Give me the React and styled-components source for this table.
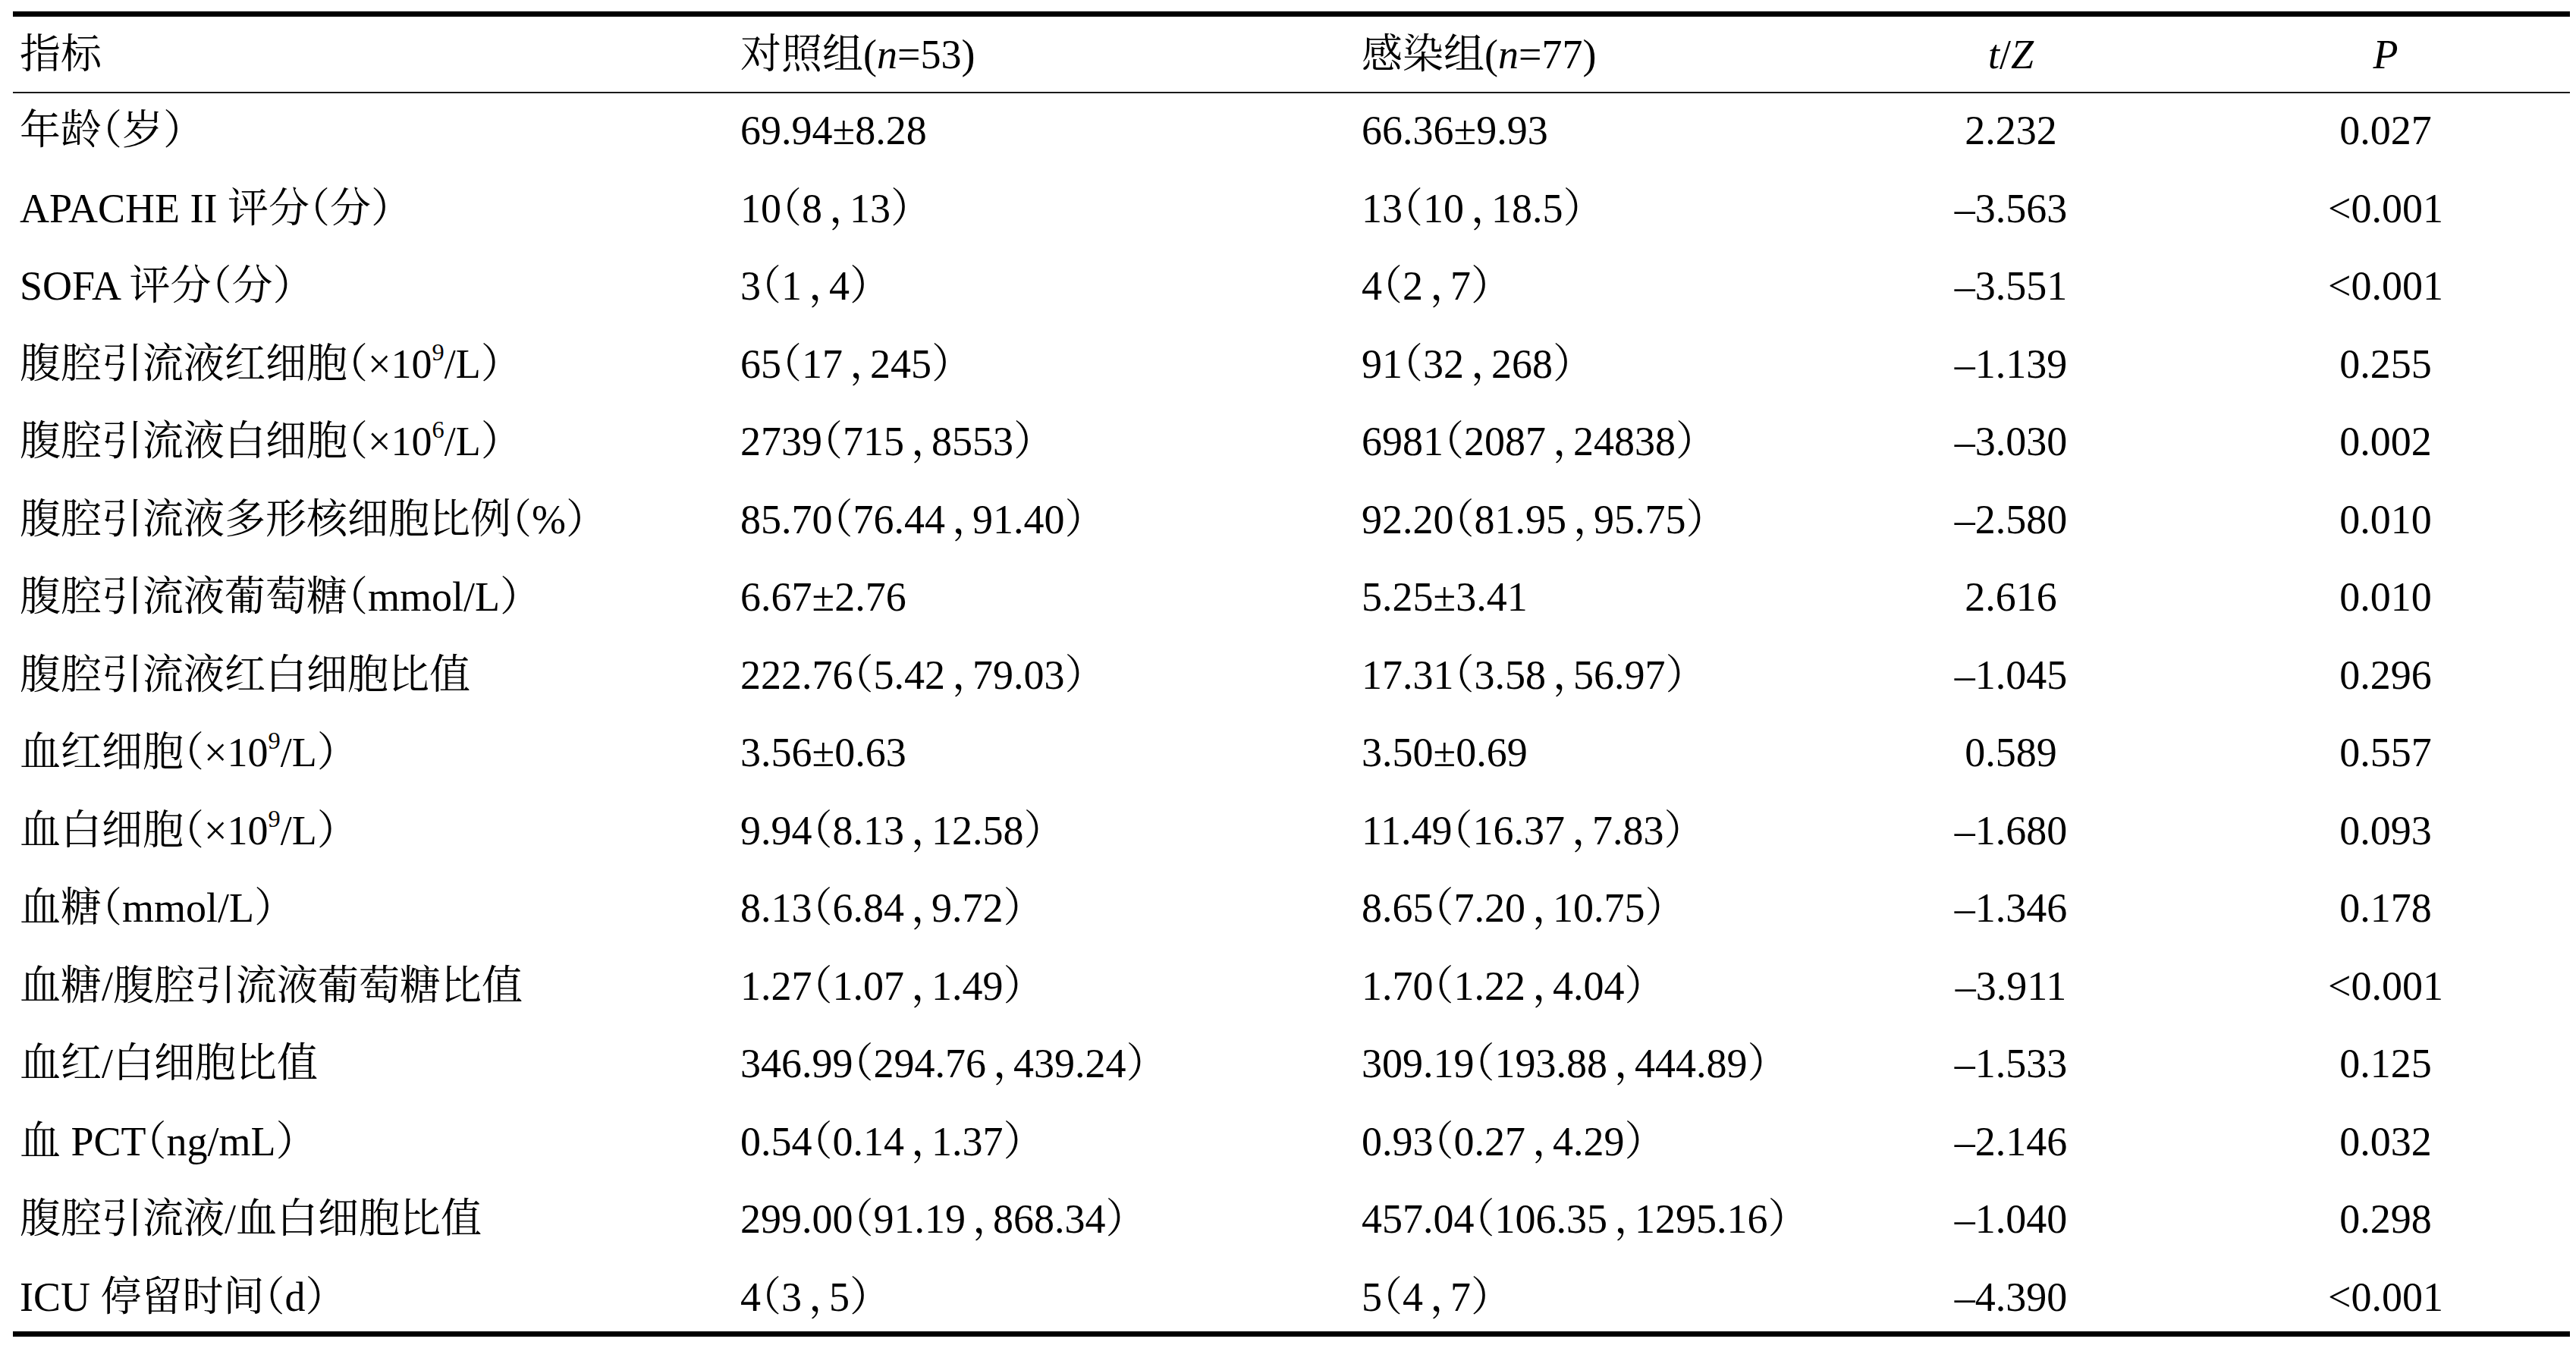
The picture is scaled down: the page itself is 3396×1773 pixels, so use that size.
import React from "react";
import styled, { createGlobalStyle } from "styled-components";

const GlobalStyle = createGlobalStyle`
  html, body {
    margin: 0;
    padding: 0;
    background: #ffffff;
  }
  body {
    font-family: "Liberation Serif", "Noto Serif CJK SC", "Noto Sans CJK SC", serif;
    color: #000000;
  }
`;

const COLS = "950px 819px 614px 502px 486px";

const Page = styled.div`
  padding: 15px 8px 0 17px;
  width: 3371px;
`;

const Table = styled.div`
  border-top: 7px solid #000;
  border-bottom: 7px solid #000;
  font-size: 54px;
  font-feature-settings: "halt";
`;

const HeaderRow = styled.div`
  display: grid;
  grid-template-columns: ${COLS};
  height: 99px;
  align-items: center;
  border-bottom: 2px solid #1a1a1a;
`;

const Row = styled.div`
  display: grid;
  grid-template-columns: ${COLS};
  height: 102.5px;
  align-items: center;
`;

const Body = styled.div`
  margin-top: -2px;
  margin-bottom: -6px;
`;

const Cell = styled.div`
  white-space: nowrap;
  line-height: 1;
  text-align: ${(props) => (props.$center ? "center" : "left")};
  padding-left: ${(props) => (props.$center ? "0" : "9px")};
`;

const Em = styled.i`
  font-style: italic;
`;

const Sup = styled.sup`
  font-size: 0.6em;
  line-height: 0;
  vertical-align: 0.7em;
`;

// full-width comma in the source sits with room on both sides
const Comma = styled.span`
  padding-left: 9px;
`;

const withCommas = (value) =>
  typeof value === "string"
    ? value
        .split("，")
        .flatMap((part, i) => (i ? [<Comma key={i}>，</Comma>, part] : [part]))
    : value;

const rows = [
  ["年龄（岁）", "69.94±8.28", "66.36±9.93", "2.232", "0.027"],
  ["APACHE II 评分（分）", "10（8，13）", "13（10，18.5）", "–3.563", "<0.001"],
  ["SOFA 评分（分）", "3（1，4）", "4（2，7）", "–3.551", "<0.001"],
  [
    <>腹腔引流液红细胞（×10<Sup>9</Sup>/L）</>,
    "65（17，245）",
    "91（32，268）",
    "–1.139",
    "0.255",
  ],
  [
    <>腹腔引流液白细胞（×10<Sup>6</Sup>/L）</>,
    "2739（715，8553）",
    "6981（2087，24838）",
    "–3.030",
    "0.002",
  ],
  ["腹腔引流液多形核细胞比例（%）", "85.70（76.44，91.40）", "92.20（81.95，95.75）", "–2.580", "0.010"],
  ["腹腔引流液葡萄糖（mmol/L）", "6.67±2.76", "5.25±3.41", "2.616", "0.010"],
  ["腹腔引流液红白细胞比值", "222.76（5.42，79.03）", "17.31（3.58，56.97）", "–1.045", "0.296"],
  [<>血红细胞（×10<Sup>9</Sup>/L）</>, "3.56±0.63", "3.50±0.69", "0.589", "0.557"],
  [<>血白细胞（×10<Sup>9</Sup>/L）</>, "9.94（8.13，12.58）", "11.49（16.37，7.83）", "–1.680", "0.093"],
  ["血糖（mmol/L）", "8.13（6.84，9.72）", "8.65（7.20，10.75）", "–1.346", "0.178"],
  ["血糖/腹腔引流液葡萄糖比值", "1.27（1.07，1.49）", "1.70（1.22，4.04）", "–3.911", "<0.001"],
  ["血红/白细胞比值", "346.99（294.76，439.24）", "309.19（193.88，444.89）", "–1.533", "0.125"],
  ["血 PCT（ng/mL）", "0.54（0.14，1.37）", "0.93（0.27，4.29）", "–2.146", "0.032"],
  ["腹腔引流液/血白细胞比值", "299.00（91.19，868.34）", "457.04（106.35，1295.16）", "–1.040", "0.298"],
  ["ICU 停留时间（d）", "4（3，5）", "5（4，7）", "–4.390", "<0.001"],
];

export default function App() {
  return (
    <>
      <GlobalStyle />
      <Page>
        <Table>
          <HeaderRow>
            <Cell>指标</Cell>
            <Cell>
              对照组(<Em>n</Em>=53)
            </Cell>
            <Cell>
              感染组(<Em>n</Em>=77)
            </Cell>
            <Cell $center>
              <Em>t</Em>/<Em>Z</Em>
            </Cell>
            <Cell $center>
              <Em>P</Em>
            </Cell>
          </HeaderRow>
          <Body>
            {rows.map((r, i) => (
              <Row key={i}>
                <Cell>{r[0]}</Cell>
                <Cell>{withCommas(r[1])}</Cell>
                <Cell>{withCommas(r[2])}</Cell>
                <Cell $center>{r[3]}</Cell>
                <Cell $center>{r[4]}</Cell>
              </Row>
            ))}
          </Body>
        </Table>
      </Page>
    </>
  );
}
